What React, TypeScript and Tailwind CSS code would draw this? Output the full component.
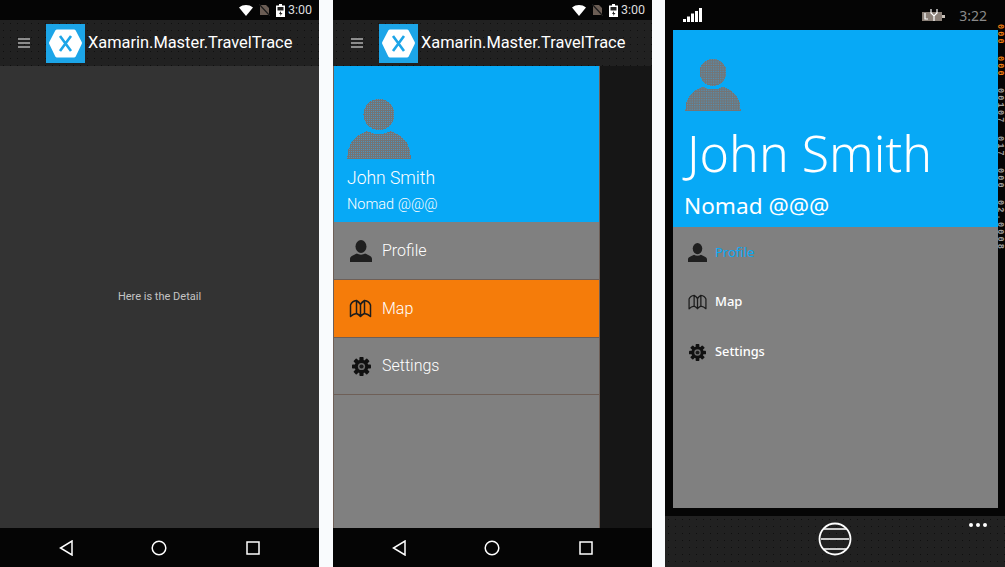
import React from "react";

const dots = "bg-[radial-gradient(#0f0f0f_0.6px,transparent_0.7px)] bg-[length:7px_7px]";

function XamarinLogo() {
  return (
    <div className="w-[39px] h-[39px] bg-[#1ca5e8] flex items-center justify-center shrink-0">
      <svg width="35" height="31" viewBox="0 0 35 31">
        <path d="M9 1.500h17a2 2 0 0 1 1.700 1l6 11.500a2 2 0 0 1 0 2l-6 12.500a2 2 0 0 1-1.700 1H9a2 2 0 0 1-1.700-1l-6-12.500a2 2 0 0 1 0-2l6-11.500a2 2 0 0 1 1.700-1z" fill="#fff" />
        <path d="M12 8l11 15M23 8L12 23" stroke="#1ca5e8" strokeWidth="2.600" fill="none" />
      </svg>
    </div>
  );
}

function AndroidStatus() {
  return (
    <div className="h-5 bg-[#050505] flex items-center justify-end pr-[7px] shrink-0">
      <svg width="14" height="11" viewBox="0 0 14 11" className="mr-[6px]">
        <path d="M0 2.500C4 -0.800 10 -0.800 14 2.500L7 11z" fill="#fff" />
      </svg>
      <svg width="11" height="12" viewBox="0 0 11 12" className="mr-[6px]">
        <path d="M1 1h6l3 3v7H1z" fill="#6b5d54" />
        <path d="M0 0l11 12" stroke="#1a1a1a" strokeWidth="1.200" />
      </svg>
      <svg width="9" height="13" viewBox="0 0 9 13" className="mr-[3px]">
        <path d="M3 0h3v1.500h3V13H0V1.500h3z" fill="#fff" />
        <rect x="1.500" y="3" width="6" height="3.500" fill="#222" />
        <path d="M5 7L3 10h1.500L4 12l2.500-3H5z" fill="#222" />
      </svg>
      <span className="font-['Roboto',sans-serif] text-[12.500px] leading-none text-[#dcdcdc] w-[24px]">3:00</span>
    </div>
  );
}

function AndroidToolbar() {
  return (
    <div className={`h-[46px] bg-[#212121] ${dots} flex items-center shrink-0`}>
      <div className="w-[46px] flex justify-center pl-[1px]">
        <div className="w-3 flex flex-col gap-[2px]">
          <div className="h-[2px] bg-[#8c8c8c]" />
          <div className="h-[2px] bg-[#8c8c8c]" />
          <div className="h-[2px] bg-[#8c8c8c]" />
        </div>
      </div>
      <XamarinLogo />
      <span className="ml-[3px] font-['Roboto',sans-serif] text-[16.400px] text-white whitespace-nowrap">Xamarin.Master.TravelTrace</span>
    </div>
  );
}

function AndroidNav() {
  return (
    <div className="h-[39px] bg-[#050505] flex items-center shrink-0 pl-[59px]">
      <svg width="14" height="16" viewBox="0 0 14 16">
        <path d="M13 1v14L1.500 8z" fill="none" stroke="#fff" strokeWidth="1.500" />
      </svg>
      <svg width="16" height="16" viewBox="0 0 16 16" className="ml-[78px]">
        <circle cx="8" cy="8" r="6.800" fill="none" stroke="#fff" strokeWidth="1.500" />
      </svg>
      <svg width="14" height="14" viewBox="0 0 14 14" className="ml-[79px]">
        <rect x="1" y="1" width="12" height="12" fill="none" stroke="#fff" strokeWidth="1.500" />
      </svg>
    </div>
  );
}

function Avatar({ className }: { className: string }) {
  return (
    <svg viewBox="0 0 64 60" className={className}>
      <defs>
        <pattern id="dither" width="2" height="2" patternUnits="userSpaceOnUse">
          <rect width="2" height="2" fill="#747474" />
          <rect width="1" height="1" fill="#4f93bb" />
        </pattern>
      </defs>
      <circle cx="32" cy="15.500" r="15.500" fill="url(#dither)" shapeRendering="crispEdges" />
      <path d="M0 60C0 46 6 37 20 32c4 2.500 8 3 12 3s8-.500 12-3c14 5 20 14 20 28z" fill="url(#dither)" shapeRendering="crispEdges" />
    </svg>
  );
}

function PersonIcon({ className }: { className: string }) {
  return (
    <svg viewBox="0 0 22 22" className={className}>
      <ellipse cx="11" cy="6.500" rx="5.500" ry="6.500" fill="#1f1f1f" />
      <path d="M0 22v-3c0-3 4-4 7-5.500 2 1.500 6 1.500 8 0 3 1.500 7 2.500 7 5.500v3z" fill="#1f1f1f" />
    </svg>
  );
}

function MapIcon({ className }: { className: string }) {
  return (
    <svg viewBox="0 0 22 19" className={className}>
      <path
        d="M1 17.500V6Q2.500 2 7 1.500Q9.500 3 11 5.500Q12.500 3 15 1.500Q19.500 2 21 6V17.500Q18.500 15 15 14.500Q12.500 15.500 11 17.500Q9.500 15.500 7 14.500Q3.500 15 1 17.500ZM7 1.500V14.500M11 5.500V17.500M15 1.500V14.500"
        fill="none"
        stroke="#1c1c1c"
        strokeWidth="1.500"
        strokeLinejoin="round"
      />
    </svg>
  );
}

function GearIcon({ className }: { className: string }) {
  const teeth = [0, 45, 90, 135];
  return (
    <svg viewBox="0 0 20 20" className={className}>
      {teeth.map((a) => (
        <rect key={a} x="7.800" y="0" width="4.400" height="20" rx="0.800" fill="#111" transform={`rotate(${a} 10 10)`} />
      ))}
      <circle cx="10" cy="10" r="7.200" fill="#111" />
      <circle cx="10" cy="10" r="3.800" fill="#6b6b6b" />
      <circle cx="10" cy="10" r="2.200" fill="#1a1a1a" />
    </svg>
  );
}

function PhoneOne() {
  return (
    <div className="w-[319px] h-full flex flex-col shrink-0">
      <AndroidStatus />
      <AndroidToolbar />
      <div className="flex-1 bg-[#333333] flex items-center justify-center">
        <span className="font-['Roboto',sans-serif] text-[11px] text-[#c4c4c4]">Here is the Detail</span>
      </div>
      <AndroidNav />
    </div>
  );
}

const androidRows = [
  { label: "Profile", icon: <PersonIcon className="w-[22px] h-[22px]" />, row: "h-[58px] bg-[#808080]" },
  { label: "Map", icon: <MapIcon className="w-[23px] h-[19px]" />, row: "h-[58px] bg-[#f57c0a]" },
  { label: "Settings", icon: <GearIcon className="w-[19px] h-[19px] ml-[1px]" />, row: "h-[57px] bg-[#808080]" },
];

function PhoneTwo() {
  return (
    <div className="w-[319px] h-full flex flex-col shrink-0">
      <AndroidStatus />
      <AndroidToolbar />
      <div className="flex-1 flex min-h-0">
        <div className="w-[267px] bg-[#808080] border-l border-r border-[#6e5f57] flex flex-col">
          <div className="h-[156px] bg-[#07a9f6] pl-[13px] pt-[33px] flex flex-col">
            <Avatar className="w-16 h-[60px]" />
            <span className="mt-[9px] font-['Roboto',sans-serif] font-light text-[17.500px] leading-5 text-white">John Smith</span>
            <span className="mt-[7px] font-['Roboto',sans-serif] font-light text-[14.500px] leading-5 text-white">Nomad @@@</span>
          </div>
          {androidRows.map((row) => (
            <div key={row.label} className={`${row.row} border-b border-[#6e5f57] flex items-center`}>
              <div className="w-[48px] pl-[5px] flex justify-center">{row.icon}</div>
              <span className="font-['Roboto',sans-serif] font-light text-[16px] text-white">{row.label}</span>
            </div>
          ))}
        </div>
        <div className="flex-1 bg-[#161616]" />
      </div>
      <AndroidNav />
    </div>
  );
}

// frame counters down the right edge of the emulator
const stripItems = [
  { text: "000", color: "text-[#f07d10]", gap: "mt-[24px]" },
  { text: "000", color: "text-[#f07d10]", gap: "mt-[10px]" },
  { text: "00107", color: "text-[#a0a0a0]", gap: "mt-[10px]" },
  { text: "017", color: "text-[#a0a0a0]", gap: "mt-[12px]" },
  { text: "000", color: "text-[#a0a0a0]", gap: "mt-[10px]" },
  { text: "02.0008", color: "text-[#a0a0a0]", gap: "mt-[10px]" },
];

function PhoneThree() {
  return (
    <div className="flex-1 h-full -ml-[1px] bg-[#050505] flex flex-col relative">
      <div className="h-[30px] flex items-center shrink-0 pl-[18px] pr-[18px]">
        <svg width="20" height="14" viewBox="0 0 20 14">
          <rect x="0" y="11" width="3" height="3" fill="#fff" />
          <rect x="4" y="8.500" width="3" height="5.500" fill="#fff" />
          <rect x="8" y="5.500" width="3" height="8.500" fill="#fff" />
          <rect x="12" y="3" width="3" height="11" fill="#fff" />
          <rect x="16" y="0" width="3" height="14" fill="#fff" />
        </svg>
        <svg width="23" height="12" viewBox="0 0 23 12" className="ml-auto">
          <rect x="0" y="3" width="20" height="9" fill="#8a8078" />
          <rect x="20" y="6" width="3" height="3" fill="#c8c0b8" />
          <path d="M9 0v4l3 3 3-3V0M12 7v5" stroke="#fff" strokeWidth="1.200" fill="none" />
          <path d="M3 4v6h3" stroke="#fff" strokeWidth="1.200" fill="none" />
        </svg>
        <span className="ml-[14px] font-['Noto_Sans',sans-serif] text-[14px] text-[#8a8a8a]">3:22</span>
      </div>
      <div className="ml-[8px] w-[325px] h-[478px] bg-[#808080] flex flex-col shrink-0">
        <div className="h-[197px] bg-[#07a9f6] pl-[12px] pt-[29px] flex flex-col">
          <Avatar className="w-[56px] h-[52px]" />
          <span className="mt-[6px] ml-[2px] font-['Noto_Sans',sans-serif] font-light text-[50px] leading-[72px] text-white whitespace-nowrap">John Smith</span>
          <span className="mt-[3px] -ml-[1px] font-['Noto_Sans',sans-serif] text-[22.600px] leading-[28px] text-white whitespace-nowrap">Nomad @@@</span>
        </div>
        <div className="flex flex-col pt-[15px] pl-[15px] gap-[30px]">
          <div className="flex items-center h-[20px] gap-[8px]">
            <PersonIcon className="w-[19px] h-[19px]" />
            <span className="font-['Noto_Sans',sans-serif] text-[13px] text-[#07a9f6] mt-[1px]">Profile</span>
          </div>
          <div className="flex items-center h-[20px] gap-[8px]">
            <MapIcon className="w-[19px] h-[16px]" />
            <span className="font-['Noto_Sans',sans-serif] font-medium text-[13px] text-white">Map</span>
          </div>
          <div className="flex items-center h-[20px] gap-[8px]">
            <GearIcon className="w-[19px] h-[17px]" />
            <span className="font-['Noto_Sans',sans-serif] font-medium text-[12.800px] text-white -mt-[1px]">Settings</span>
          </div>
        </div>
      </div>
      <div className={`mt-auto h-[51px] bg-[#212121] ${dots} flex items-start justify-center relative`}>
        <svg width="34" height="34" viewBox="0 0 34 34" className="mt-[6px]">
          <circle cx="17" cy="17" r="15.500" fill="none" stroke="#fff" strokeWidth="1.800" />
          <path d="M3 17h28M6 7h22M6 27h22" stroke="#fff" strokeWidth="1.500" />
        </svg>
        <div className="absolute right-[18px] top-[7px] flex gap-[3px]">
          <div className="w-1 h-1 rounded-full bg-white" />
          <div className="w-1 h-1 rounded-full bg-white" />
          <div className="w-1 h-1 rounded-full bg-white" />
        </div>
      </div>
      <div className="absolute top-0 right-0 w-[10px] flex flex-col items-center">
        {stripItems.map((item, i) => (
          <span
            key={i}
            className={`${item.gap} ${item.color} font-['Liberation_Mono',monospace] font-bold text-[8.500px] leading-[10px] tracking-[2.200px] [writing-mode:vertical-rl] whitespace-nowrap shrink-0`}
          >
            {item.text}
          </span>
        ))}
      </div>
    </div>
  );
}

export default function App() {
  return (
    <div className="w-[1005px] h-[567px] bg-[#f9fbfd] flex gap-[14px] overflow-hidden">
      <PhoneOne />
      <PhoneTwo />
      <PhoneThree />
    </div>
  );
}
